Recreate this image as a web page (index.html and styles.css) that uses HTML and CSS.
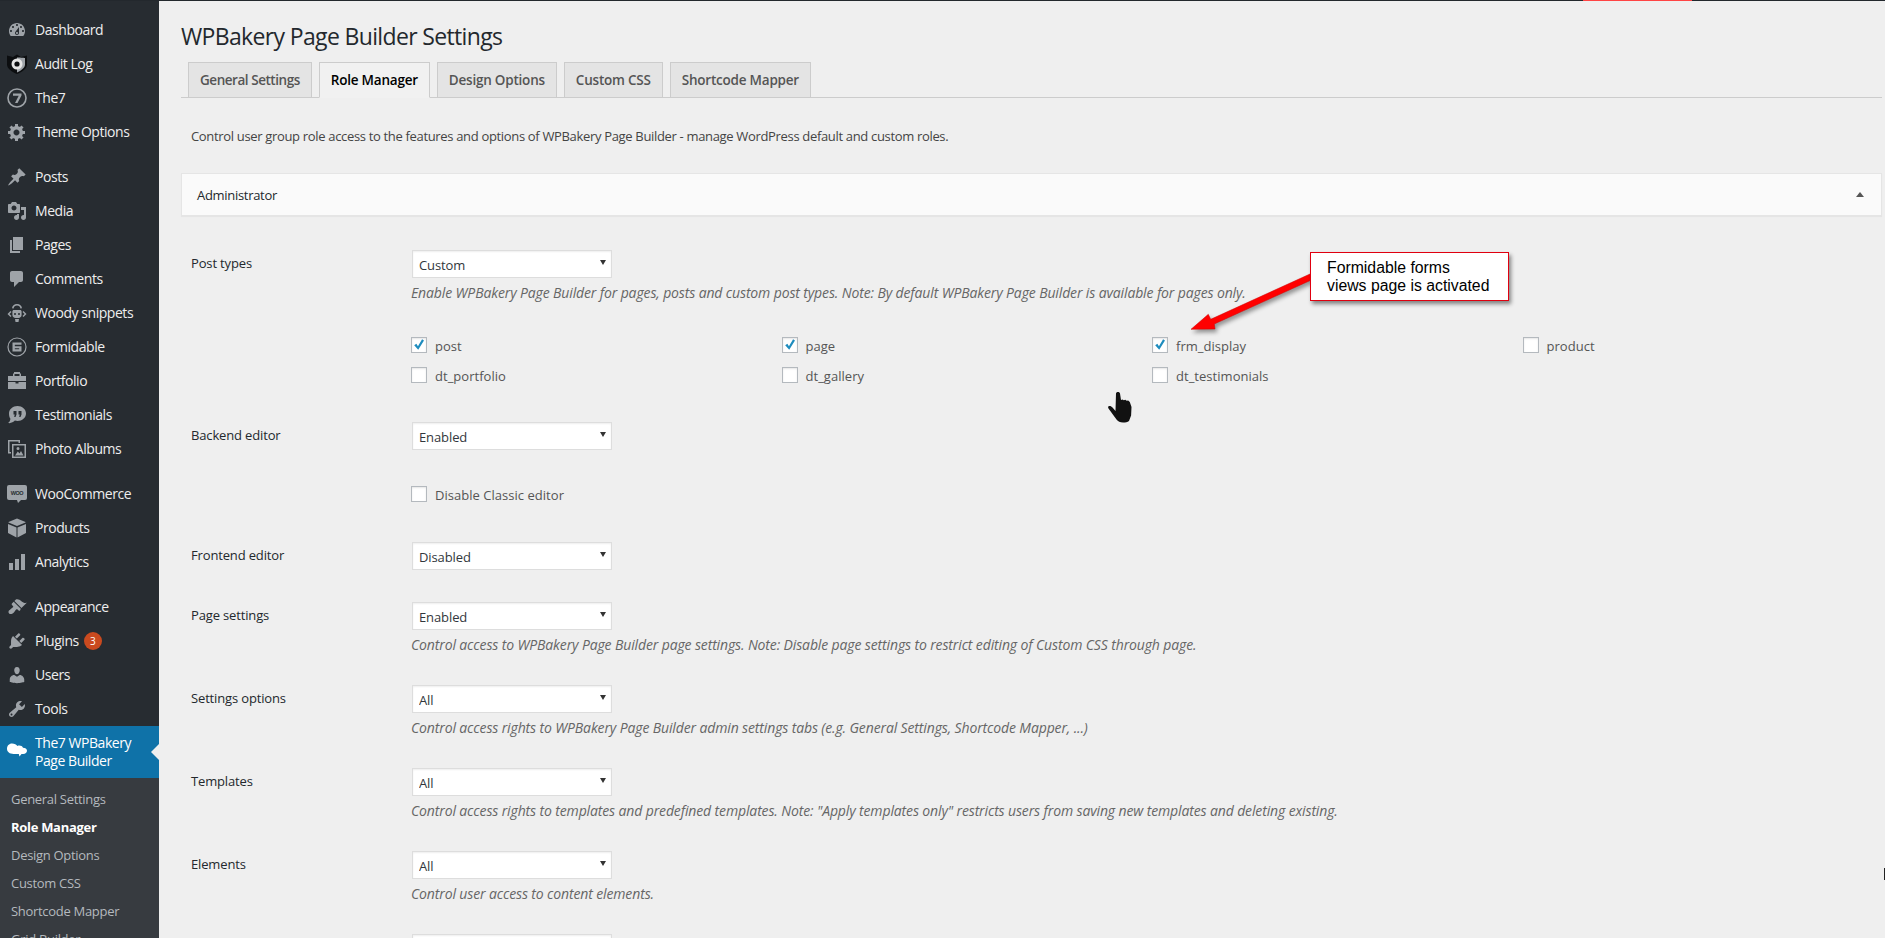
FILE: index.html
```html
<!DOCTYPE html>
<html lang="en">
<head>
<meta charset="utf-8">
<title>WPBakery Page Builder Settings</title>
<link rel="stylesheet" href="styles.css">
</head>
<body>
<div class="topbar"><span class="topbar-flag"></span></div>
<div class="app">
  <nav class="sidebar">
    <ul class="menu">
      <li><svg class="ico" viewBox="0 0 20 20"><path d="M3.76 16h12.48c1.1-1.37 1.76-3.11 1.76-5 0-4.42-3.58-8-8-8s-8 3.58-8 8c0 1.89.66 3.63 1.76 5zM10 4c.55 0 1 .45 1 1s-.45 1-1 1-1-.45-1-1 .45-1 1-1zM6 6c.55 0 1 .45 1 1s-.45 1-1 1-1-.45-1-1 .45-1 1-1zm8 0c.55 0 1 .45 1 1s-.45 1-1 1-1-.45-1-1 .45-1 1-1zm-5.37 5.55L12 7v6c0 1.1-.9 2-2 2s-2-.9-2-2c0-.57.24-1.08.63-1.45zM4 10c.55 0 1 .45 1 1s-.45 1-1 1-1-.45-1-1 .45-1 1-1zm12 0c.55 0 1 .45 1 1s-.45 1-1 1-1-.45-1-1 .45-1 1-1zm-5 3c0-.55-.45-1-1-1s-1 .45-1 1 .45 1 1 1 1-.45 1-1z"/></svg>Dashboard</li>
      <li><svg class="ico" viewBox="0 0 20 20"><path fill="#0c0e10" d="M0 1.500 6 3l4-2.500L14 3l6-1.500v9c0 4-5 7.500-10 9.500C5 18 0 14.500 0 10.500z"/><path fill="#9ea3a8" d="M10 3.500C14 3.500 18 4 18 4v6.500c0 3.500-4 6-8 8z"/><circle cx="10" cy="10" r="5.500" fill="#e4e4e4"/><circle cx="10" cy="10" r="2.600" fill="#0c0e10"/></svg>Audit Log</li>
      <li><svg class="ico" viewBox="0 0 20 20"><circle cx="10" cy="10" r="9" fill="none" stroke="#9ea3a8" stroke-width="1.600"/><path d="M6 5.500h8.500v2L10.500 15H8l3.700-7.200H6z"/></svg>The7</li>
      <li class="sep"><svg class="ico" viewBox="0 0 20 20"><path d="M18 12h-2.180c-.17.7-.44 1.350-.81 1.930l1.540 1.540-2.100 2.100-1.540-1.540c-.58.36-1.230.63-1.910.79V19H8v-2.180c-.68-.16-1.330-.43-1.910-.79l-1.540 1.540-2.120-2.120 1.540-1.540c-.36-.58-.63-1.230-.79-1.910H1V9.030h2.170c.16-.7.44-1.350.8-1.940L2.430 5.550l2.100-2.100 1.540 1.540c.58-.37 1.240-.64 1.930-.81V2h3v2.180c.68.16 1.330.43 1.910.79l1.540-1.540 2.120 2.120-1.540 1.540c.36.59.64 1.240.8 1.940H18V12zm-8.500 1.500c1.660 0 3-1.340 3-3s-1.340-3-3-3-3 1.340-3 3 1.340 3 3 3z"/></svg>Theme Options</li>
      <li><svg class="ico" viewBox="0 0 20 20"><path d="M10.440 3.020l1.820-1.820 6.360 6.350-1.830 1.820c-1.050-.68-2.480-.57-3.410.36l-.75.75c-.92.93-1.040 2.350-.35 3.410l-1.830 1.820-2.410-2.410-2.800 2.790c-.42.42-3.380 2.710-3.800 2.290s1.860-3.390 2.280-3.810l2.790-2.790L4.100 9.360l1.830-1.820c1.050.69 2.480.57 3.400-.36l.75-.75c.93-.92 1.050-2.350.36-3.410z"/></svg>Posts</li>
      <li><svg class="ico" viewBox="0 0 20 20"><path d="M13 11V4c0-.55-.45-1-1-1h-1.670L9 1H5L3.670 3H2c-.55 0-1 .45-1 1v7c0 .55.45 1 1 1h10c.55 0 1-.45 1-1zM7 4.500c1.380 0 2.500 1.120 2.500 2.500S8.380 9.500 7 9.500 4.500 8.380 4.500 7 5.620 4.500 7 4.500zM14 6h5v10.500c0 1.380-1.120 2.500-2.500 2.500S14 17.880 14 16.500s1.120-2.500 2.500-2.500c.17 0 .34.02.5.05V9h-3V6zm-4 8.050V13h2v3.500c0 1.380-1.120 2.500-2.500 2.500S7 17.880 7 16.500 8.120 14 9.500 14c.17 0 .34.02.5.05z"/></svg>Media</li>
      <li><svg class="ico" viewBox="0 0 20 20"><path d="M6 15V2h10v13H6zm-1 1h8v2H3V5h2v11z"/></svg>Pages</li>
      <li><svg class="ico" viewBox="0 0 20 20"><path d="M5 2h9c1.100 0 2 .9 2 2v7c0 1.100-.9 2-2 2h-2l-5 5v-5H5c-1.100 0-2-.9-2-2V4c0-1.100.9-2 2-2z"/></svg>Comments</li>
      <li><svg class="ico" viewBox="0 0 20 20"><path d="M10 1c2.800 0 4.800 1.700 5 4.300l-1.600.2C13.200 3.700 11.900 2.600 10 2.600S6.800 3.700 6.600 5.500L5 5.300C5.200 2.700 7.200 1 10 1zM7 7h6c1 0 1.600.7 1.600 1.600V12c0 1.600-1.400 3-3 3H8.400c-1.600 0-3-1.400-3-3V8.600C5.400 7.700 6 7 7 7zm1 3a1 1 0 1 0 0 2 1 1 0 0 0 0-2zm4 0a1 1 0 1 0 0 2 1 1 0 0 0 0-2zM3.500 8 4.500 9 2.500 11 4.500 13 3.500 14 .5 11zM16.500 8 19.500 11 16.500 14 15.500 13 17.500 11 15.500 9zM8 16h4l-.5 3h-3z"/></svg>Woody snippets</li>
      <li><svg class="ico" viewBox="0 0 20 20"><circle cx="10" cy="10" r="9" fill="none" stroke="#9ea3a8" stroke-width="1.200"/><path d="M5.500 5.500h9v2.200H7.800v1.500h6.700v5.300H5.500zm2.300 5.700v1.100h4.400v-1.100z"/></svg>Formidable</li>
      <li><svg class="ico" viewBox="0 0 20 20"><path d="M7 1h6v1.500h1V5h5v5H1V5h5V2.500h1zM7.500 3v2h5V3zM1 11h7.500v1.500h3V11H19v7H1z"/></svg>Portfolio</li>
      <li><svg class="ico" viewBox="0 0 20 20"><path d="M10.500 1C15.200 1 19 4.300 19 8.500S15.200 16 10.500 16c-.9 0-1.800-.1-2.600-.4C6.400 17.500 3.500 18.500 1 18c1.500-1 2.300-2.300 2.400-4.200C2.500 12.500 2 10.600 2 8.500 2 4.300 5.800 1 10.500 1zM6.500 6v3.500h1.200L7.200 12h1.300l1-2.500V6zm5 0v3.500h1.200l-.5 2.500h1.300l1-2.500V6z" fill-rule="evenodd"/></svg>Testimonials</li>
      <li class="sep"><svg class="ico" viewBox="0 0 20 20"><path d="M1 1h12v3h-1.500V2.500h-9V13H4v1.500H1zM5 5h14v14H5zm1.500 1.500v11h11v-11zM11 8a1.500 1.500 0 1 1 0 3 1.500 1.500 0 0 1 0-3zM8 16.500l2.800-4 1.700 2 1.500-2.500 2.500 4.500z" fill-rule="evenodd"/></svg>Photo Albums</li>
      <li><svg class="ico" viewBox="0 0 20 20"><rect x="0" y="1" width="20" height="15" rx="2"/><path d="M10 16h4l-3 3z"/><text x="10" y="11" class="woo-mark" text-anchor="middle">WOO</text></svg>WooCommerce</li>
      <li><svg class="ico" viewBox="0 0 20 20"><path d="M10 .5 18.500 4v.5L10 8 1.500 4.500V4zM1 6l8.500 3.500v10L1 15zM19 6v9l-8.500 4.500v-10z"/></svg>Products</li>
      <li class="sep"><svg class="ico" viewBox="0 0 20 20"><path d="M2 11h4v7H2zM8 7h4v11H8zM14 2h4v16h-4z"/></svg>Analytics</li>
      <li><svg class="ico" viewBox="0 0 20 20"><path d="M14.480 11.060L7.410 3.990l1.500-1.500c.5-.56 2.300-.47 3.510.32 1.210.8 1.430 1.280 2.910 2.100 1.180.64 2.450 1.260 4.450.85zm-.71.71L6.700 4.700 4.930 6.470c-.39.39-.39 1.020 0 1.410l1.060 1.060c.39.39.39 1.030 0 1.420-.6.6-1.430 1.110-2.210 1.690-.35.26-.7.53-1.010.84C1.430 13.230.99 15.300 2.100 16.400c1.110 1.110 3.180.67 4.520-.66.31-.31.58-.66.84-1.010.58-.78 1.090-1.610 1.690-2.210.39-.39 1.030-.39 1.420 0l1.060 1.060c.39.39 1.020.39 1.410 0z"/></svg>Appearance</li>
      <li><svg class="ico" viewBox="0 0 20 20"><path d="M13.110 4.360L9.870 7.600 8 5.730l3.240-3.240c.35-.34 1.050-.2 1.560.32.52.51.66 1.210.31 1.550zm-8 1.770l.91-1.120 9.010 9.010-1.190.84c-.71.71-2.630 1.160-3.820 1.160H6.140L4.900 17.260c-.59.59-1.540.59-2.120 0-.59-.58-.59-1.530 0-2.120l1.240-1.240v-3.880c0-1.130.4-3.190 1.090-3.890zm7.260 3.970l3.240-3.240c.34-.35 1.040-.21 1.550.31.52.51.66 1.210.31 1.550l-3.240 3.250z"/></svg>Plugins<span class="badge">3</span></li>
      <li><svg class="ico" viewBox="0 0 20 20"><path d="M10 9.250c-2.270 0-2.730-3.440-2.730-3.440C7 4.020 7.820 2 9.970 2c2.160 0 2.980 2.020 2.710 3.810 0 0-.41 3.440-2.680 3.440zm0 2.570L12.720 10c2.390 0 4.520 2.330 4.520 4.530v2.490s-3.650 1.130-7.240 1.130c-3.650 0-7.240-1.130-7.240-1.130v-2.490c0-2.250 1.940-4.480 4.470-4.480z"/></svg>Users</li>
      <li><svg class="ico" viewBox="0 0 20 20"><path d="M16.680 9.770c-1.340 1.340-3.300 1.670-4.950.99l-5.410 6.520c-.99.99-2.590.99-3.580 0s-.99-2.590 0-3.570l6.520-5.420c-.68-1.650-.35-3.610.99-4.950 1.280-1.280 3.120-1.620 4.720-1.060l-2.890 2.890 2.820 2.820 2.860-2.870c.53 1.580.18 3.390-1.080 4.650zM3.810 16.210c.4.39 1.040.39 1.430 0 .4-.4.4-1.040 0-1.430-.39-.4-1.030-.4-1.430 0-.39.39-.39 1.030 0 1.430z"/></svg>Tools</li>
      <li class="current"><svg class="ico ico-white" viewBox="0 0 20 20"><path d="M5 1.500C7.500 1.500 9.500 2.500 10.300 4c2-.9 5-.3 5.700 1.800 2.200 0 4 1.200 4 3 0 1.900-1.600 3.200-3.800 3.200h-1.700L12.500 14.500 11.800 12H6.500C2.800 12 0 10 0 6.800 0 3.800 2 1.500 5 1.500z"/></svg><span>The7 WPBakery<br>Page Builder</span></li>
    </ul>
    <ul class="submenu">
      <li>General Settings</li>
      <li class="on">Role Manager</li>
      <li>Design Options</li>
      <li>Custom CSS</li>
      <li>Shortcode Mapper</li>
      <li>Grid Builder</li>
    </ul>
  </nav>

  <main class="main">
    <h1 class="title">WPBakery Page Builder Settings</h1>
    <div class="tabs">
      <a class="tab tab-tight">General Settings</a>
      <a class="tab active">Role Manager</a>
      <a class="tab">Design Options</a>
      <a class="tab">Custom CSS</a>
      <a class="tab">Shortcode Mapper</a>
    </div>
    <p class="intro">Control user group role access to the features and options of WPBakery Page Builder - manage WordPress default and custom roles.</p>
    <div class="role-box"><span>Administrator</span><i class="caret-up"></i></div>

    <div class="row">
      <div class="row-label">Post types</div>
      <div>
        <div class="select"><select><option>Custom</option></select></div>
        <p class="hint">Enable WPBakery Page Builder for pages, posts and custom post types. Note: By default WPBakery Page Builder is available for pages only.</p>
        <div class="checks">
          <label class="check"><span class="box"><svg viewBox="0 0 16 16"><path d="M2.500 8.200 5 6.500l1.800 2.800L11.500 1.500l2.200 1.400-6.600 10.500z"/></svg></span>post</label>
          <label class="check"><span class="box"><svg viewBox="0 0 16 16"><path d="M2.500 8.200 5 6.500l1.800 2.800L11.500 1.500l2.200 1.400-6.600 10.500z"/></svg></span>page</label>
          <label class="check"><span class="box"><svg viewBox="0 0 16 16"><path d="M2.500 8.200 5 6.500l1.800 2.800L11.500 1.500l2.200 1.400-6.600 10.500z"/></svg></span>frm_display</label>
          <label class="check"><span class="box"></span>product</label>
          <label class="check"><span class="box"></span>dt_portfolio</label>
          <label class="check"><span class="box"></span>dt_gallery</label>
          <label class="check"><span class="box"></span>dt_testimonials</label>
        </div>
      </div>
    </div>

    <div class="row">
      <div class="row-label">Backend editor</div>
      <div>
        <div class="select"><select><option>Enabled</option></select></div>
        <div class="classic"><label class="check"><span class="box"></span>Disable Classic editor</label></div>
      </div>
    </div>

    <div class="row row-wide">
      <div class="row-label">Frontend editor</div>
      <div><div class="select"><select><option>Disabled</option></select></div></div>
    </div>

    <div class="row">
      <div class="row-label">Page settings</div>
      <div>
        <div class="select"><select><option>Enabled</option></select></div>
        <p class="hint">Control access to WPBakery Page Builder page settings. Note: Disable page settings to restrict editing of Custom CSS through page.</p>
      </div>
    </div>

    <div class="row">
      <div class="row-label">Settings options</div>
      <div>
        <div class="select"><select><option>All</option></select></div>
        <p class="hint">Control access rights to WPBakery Page Builder admin settings tabs (e.g. General Settings, Shortcode Mapper, ...)</p>
      </div>
    </div>

    <div class="row">
      <div class="row-label">Templates</div>
      <div>
        <div class="select"><select><option>All</option></select></div>
        <p class="hint">Control access rights to templates and predefined templates. Note: "Apply templates only" restricts users from saving new templates and deleting existing.</p>
      </div>
    </div>

    <div class="row">
      <div class="row-label">Elements</div>
      <div>
        <div class="select"><select><option>All</option></select></div>
        <p class="hint">Control user access to content elements.</p>
      </div>
    </div>

    <div class="row">
      <div class="row-label"></div>
      <div><div class="select"><select><option>All</option></select></div></div>
    </div>
  </main>
</div>

<svg class="arrow" viewBox="0 0 130 64" aria-hidden="true">
  <path class="arrow-fill" d="M120 4 122.500 9.500 24.300 54 25 59 1 59.300 18.300 44.300 20.700 49.300z"/>
</svg>
<div class="callout">Formidable forms<br>views page is activated</div>
<svg class="hand" viewBox="0 0 25 31" aria-hidden="true"><path d="M8 1.500C8 .5 9 0 10 0s2 .6 2 1.600L13 8l1.500-.5 1.300.7 1.500-.4 1.400.9 1.500-.2 1.600 1.400 1.700 5-.4 8.500-2.100 5.600c-1.500 1.200-3.500 1.500-6 1.500-3 0-5-1-6.500-3L.5 16.500C-.2 15.300 0 14.300 1 14c1.300-.3 2.700.5 3.500 1.500L7.500 19z"/></svg>
<i class="edge-mark"></i>
</body>
</html>
```
FILE: styles.css
```css
* { box-sizing: border-box; }
html, body { margin: 0; padding: 0; height: 938px; overflow: hidden; }
body {
  position: relative;
  background: #efefef;
  font-family: "Open Sans", "Noto Sans", sans-serif;
  font-size: 13px;
  color: #444;
}
ul { list-style: none; margin: 0; padding: 0; }
p { margin: 0; }

.topbar { height: 1px; background: #23282d; position: relative; }
.topbar-flag { position: absolute; left: 1583px; width: 109px; top: 0; height: 1px; background: #f44; }

.app { display: flex; height: 937px; }

.sidebar { width: 159px; flex: none; background: #272c31; overflow: hidden; }
.menu { padding-top: 12px; }
.menu li {
  height: 34px;
  display: flex;
  align-items: center;
  font-size: 14px;
  letter-spacing: -.45px;
  color: #eee;
  padding: 0 0 1px 7px;
}
.menu li.sep { margin-bottom: 11px; }
.ico { width: 20px; height: 20px; margin-right: 8px; flex: none; fill: #9ea3a8; }
.woo-mark { font: 700 5.500px "Liberation Sans", sans-serif; fill: #272c31; }
.ico-white { fill: #fff; }
.badge {
  width: 18px; height: 18px; border-radius: 50%;
  background: #ca4a1f; color: #fff;
  font-size: 10px; text-align: center; line-height: 18px;
  margin-left: 5px; letter-spacing: 0;
}
.menu li.current {
  height: 52px;
  background: #0f72a8;
  color: #fff;
  line-height: 18px;
  position: relative;
  padding-bottom: 0;
}
.menu li.current::after {
  content: "";
  position: absolute; right: 0; top: 18px;
  border: 8px solid transparent;
  border-right-color: #efefef;
  border-left-width: 0;
}
.submenu { background: #373b40; padding-top: 7px; height: 200px; }
.submenu li {
  height: 28px; line-height: 28px;
  padding-left: 11px;
  font-size: 13px;
  letter-spacing: -.3px;
  color: #b4b9be;
}
.submenu li.on { color: #fff; font-weight: 700; }

.main { flex: 1; min-width: 0; padding: 0 3px 0 22px; }
.title {
  margin: 21px 0 0;
  font-size: 23px; line-height: 29px; font-weight: 400;
  letter-spacing: -.65px;
  color: #23282d;
}
.tabs {
  display: flex; gap: 7px;
  margin-top: 11px; padding-left: 7px;
  height: 36px;
  border-bottom: 1px solid #ccc;
}
.tab {
  height: 36px;
  padding: 0 11px;
  line-height: 34px;
  font-size: 13.500px; font-weight: 600;
  letter-spacing: -.22px;
  color: #555;
  background: #e4e4e4;
  border: 1px solid #ccc;
}
.tab-tight { letter-spacing: -.46px; }
.tab.active { background: #f1f1f1; border-bottom-color: #f1f1f1; color: #000; }

.intro { margin: 28px 0 0 10px; line-height: 20px; letter-spacing: -.33px; color: #444; }

.role-box {
  margin-top: 27px; height: 43px;
  display: flex; align-items: center; justify-content: space-between;
  padding: 0 17px 0 15px;
  background: #fafafa;
  border: 1px solid #e5e5e5;
  box-shadow: 0 1px 1px rgba(0,0,0,.04);
  font-weight: 500; letter-spacing: -.3px; color: #23282d;
}
.caret-up { border: 4px solid transparent; border-bottom: 5px solid #555; border-top: 0; }

.row {
  display: grid; grid-template-columns: 220px 1fr;
  padding-left: 10px; margin-bottom: 31px;
}
.row-wide { margin-bottom: 32px; }
.role-box + .row { margin-top: 34px; }
.row-label { padding-top: 3px; line-height: 20px; font-weight: 500; letter-spacing: -.15px; color: #23282d; }

.select { position: relative; width: 200px; height: 28px; margin-left: 1px; }
.select::after {
  content: ""; position: absolute; right: 6px; top: 10px;
  border: 3.500px solid transparent; border-top: 5px solid #333; border-bottom: 0;
}
.select select {
  appearance: none;
  width: 100%; height: 100%;
  padding: 2px 0 0 6px;
  border: 1px solid #ddd;
  border-radius: 0;
  background: #fff;
  box-shadow: inset 0 1px 2px rgba(0,0,0,.07);
  font: 13px "Open Sans", sans-serif;
  letter-spacing: -.1px;
  color: #32373c;
}
.hint { margin-top: 6px; font-size: 14px; line-height: 18px; font-style: italic; letter-spacing: -.13px; color: #666; }

.checks {
  display: grid; grid-template-columns: repeat(4, 370.500px);
  grid-auto-rows: 16px; row-gap: 14px;
  margin-top: 35px; padding-bottom: 8px;
}
.check { display: flex; align-items: flex-start; line-height: 19px; letter-spacing: .03px; color: #555; }
.box {
  width: 16px; height: 16px; flex: none; margin-right: 8px;
  background: #fff; border: 1px solid #b4b9be;
  box-shadow: inset 0 1px 2px rgba(0,0,0,.1);
}
.box svg { display: block; width: 14px; height: 14px; fill: #1e8cbe; }
.classic { margin-top: 36px; height: 25px; }

.arrow { position: absolute; left: 1190px; top: 270px; width: 130px; height: 64px; overflow: visible; }
.arrow-fill { fill: #f00; stroke: #c00; stroke-width: .5; filter: drop-shadow(2px 3px 2px rgba(0,0,0,.4)); }
.callout {
  position: absolute; left: 1310px; top: 252px; width: 199px; height: 49px;
  padding: 6px 0 0 16px;
  background: #fff;
  border: 1px solid #e0000f;
  box-shadow: 2px 3px 4px rgba(0,0,0,.45);
  font: 15.800px/18px "Liberation Sans", Arial, sans-serif;
  color: #000;
}
.hand { position: absolute; left: 1108px; top: 392px; width: 25px; height: 31px; fill: #111; }
.edge-mark { position: absolute; left: 1884px; top: 868px; width: 1px; height: 12px; background: #222; }
```
